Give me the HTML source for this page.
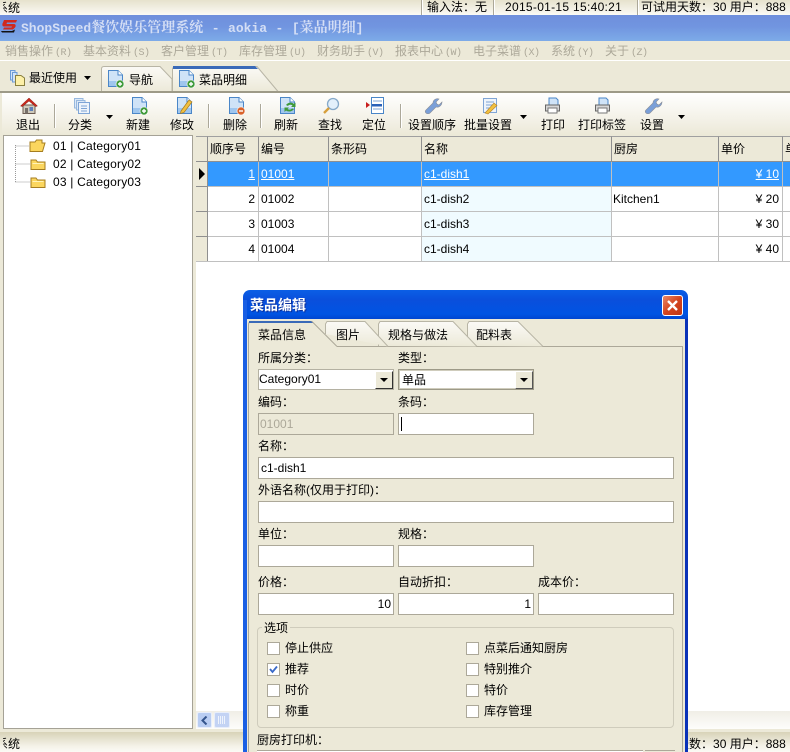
<!DOCTYPE html>
<html lang="zh"><head><meta charset="utf-8"><title>ShopSpeed</title>
<style>
html,body{margin:0;padding:0;width:790px;height:752px;overflow:hidden}
body{background:#ece9d8;font:12px/14px "Liberation Sans","Noto Sans CJK SC",sans-serif;color:#000}
div,span,svg{position:absolute;box-sizing:border-box}
#r{left:0;top:0;width:790px;height:752px;overflow:hidden;background:#ece9d8}
i{font-style:normal}
i.k{font-family:"Noto Sans CJK TC",sans-serif}
i.s{font:10px/14px "Liberation Mono",monospace;letter-spacing:-.5px;margin-left:2px}
i.z{font:bold 14px/15px "Noto Serif CJK SC",serif}
.t{white-space:nowrap}
.c{transform:translateX(-50%)}
.sep{width:1px;background:#aca899;box-shadow:1px 0 0 #fff}
.m{top:44px;color:#aca899;white-space:nowrap}
.h{top:136px;height:26px;background:#ece9d8;border-top:1px solid #a0a0a0;border-right:1px solid #8f8f8f;border-bottom:1px solid #8f8f8f;padding:5px 0 0 2px;white-space:nowrap}
.rl{left:196px;width:594px;height:1px;background:#c0c0c0}
.l{white-space:nowrap}
.cb{width:13px;height:13px;background:#fff;border:1px solid #aca899}
</style></head><body><div id="r">

<svg width="0" height="0" style="left:0;top:0"><defs>
<g id="doc"><path d="M1.500 .5H11L15.500 5V16.500H1.500Z" fill="#cfe3f7" stroke="#4a86c8"/><path d="M11 .5V5H15.500" fill="#fff" stroke="#4a86c8"/><path d="M2 11H15V16H2Z" fill="#9fc6ee"/></g>
<g id="plus"><circle cx="13" cy="14" r="4" fill="#3f9a3a" stroke="#fff" stroke-width=".6"/><path d="M11 14H15M13 12V16" stroke="#fff" stroke-width="1.400"/></g>
<g id="wr"><path d="M2 16C1 15 1 14 2 13L9 6C9 3 12 1 15 2L12 5L13 7L15 8L18 5C18 8 15 11 12 10L6 16C5 17 3 17 2 16Z" fill="#7a9fd8" stroke="#8a8f9a" stroke-width=".6"/></g>
<g id="pr"><path d="M5 1H12L14 3V8H5Z" fill="#cfe3f7" stroke="#4a86c8"/><path d="M1.500 8H15.500V14H1.500Z" fill="#d6d6d6" stroke="#666"/><path d="M4 11H13V16H4Z" fill="#fff" stroke="#777"/></g>
<g id="fold"><path d="M1 3H6L7.500 5H15V12.500H1Z" fill="#fbd65e" stroke="#a57d20"/><path d="M2.500 6.500H13.500" stroke="#fff3b8"/></g>
</defs></svg>

<!-- top status bar -->
<div style="left:0;top:0;width:790px;height:15px;background:linear-gradient(#e6e2cd,#fbfaf5)"></div>
<div class="t" style="left:3px;top:1px;width:17px;overflow:hidden;direction:rtl">系统</div>
<div class="sep" style="left:421px;top:0;height:15px"></div>
<div class="t" style="left:427px;top:0">输入法<i class="k">：</i>无</div>
<div class="sep" style="left:493px;top:0;height:15px"></div>
<div class="t" style="left:505px;top:0;letter-spacing:.3px">2015-01-15 15:40:21</div>
<div class="sep" style="left:637px;top:0;height:15px"></div>
<div class="t" style="left:641px;top:0">可试用天数<i class="k">：</i>30 用户<i class="k">：</i>888</div>

<!-- title bar -->
<div style="left:0;top:15px;width:790px;height:26px;background:linear-gradient(#6f8fdc,#7195e0 45%,#7dabe8)"></div>
<svg style="left:1px;top:19px" width="17" height="16" viewBox="0 0 17 16"><path d="M3 1H16L15 3.500H6L5.500 5H13C15 5 15 7.500 14 8.500L12 10.500H2L3 8.500H10.500L11 7.500H3C1 7.500 1 5 2 3.500Z" fill="#d0281e"/><path d="M0 12H11L14 10.500 13 13.500H1Z" fill="#111"/></svg>
<div class="t" style="left:21px;top:20px;color:#d4def5;font:bold 13px/15px 'Liberation Mono',monospace;word-spacing:.7px">ShopSpeed<i class="z">餐饮娱乐管理系统</i> - aokia - [<i class="z">菜品明细</i>]</div>

<!-- menu -->
<div class="m" style="left:5px">销售操作<i class="s">(R)</i></div>
<div class="m" style="left:83px">基本资料<i class="s">(S)</i></div>
<div class="m" style="left:161px">客户管理<i class="s">(T)</i></div>
<div class="m" style="left:239px">库存管理<i class="s">(U)</i></div>
<div class="m" style="left:317px">财务助手<i class="s">(V)</i></div>
<div class="m" style="left:395px">报表中心<i class="s">(W)</i></div>
<div class="m" style="left:473px">电子菜谱<i class="s">(X)</i></div>
<div class="m" style="left:551px">系统<i class="s">(Y)</i></div>
<div class="m" style="left:605px">关于<i class="s">(Z)</i></div>
<div style="left:0;top:60px;width:790px;height:1px;background:#fff"></div>

<!-- tabs row -->
<svg style="left:9px;top:69px" width="17" height="17" viewBox="0 0 17 17"><path d="M1.500 1.500H6V11H1.500Z" fill="#d3e4f7" stroke="#6d9bd6"/><path d="M3.500 3.500H8V13H3.500Z" fill="#d3e4f7" stroke="#6d9bd6"/><path d="M6.500 6.500H12L15.500 9V16.500H6.500Z" fill="#fdf0a8" stroke="#8a8040"/></svg>
<div class="t" style="left:29px;top:71px">最近使用</div>
<svg style="left:84px;top:76px" width="7" height="4"><path d="M0 0H7L3.500 4Z" fill="#000"/></svg>
<svg style="left:100px;top:65px" width="180" height="28" viewBox="0 0 180 28"><defs><linearGradient id="tg" x1="0" y1="0" x2="0" y2="1"><stop offset="0" stop-color="#fbfaf6"/><stop offset="1" stop-color="#ece9d8"/></linearGradient></defs><path d="M1.500 26V4Q1.500 1.500 4 1.500H60L72 14V27H1.500Z" fill="url(#tg)" stroke="#b8b5a5"/><path d="M72.500 26V3.500L74 1.500H157L178 26.500" fill="url(#tg)" stroke="#b8b5a5"/><path d="M73 1H155L158 4H73Z" fill="#3a6ab8"/></svg>
<svg style="left:107px;top:70px" width="19" height="19" viewBox="0 0 19 19"><use href="#doc"/><use href="#plus"/></svg>
<div class="t" style="left:129px;top:73px">导航</div>
<svg style="left:178px;top:70px" width="19" height="19" viewBox="0 0 19 19"><use href="#doc"/><use href="#plus"/></svg>
<div class="t" style="left:199px;top:73px">菜品明细</div>
<div style="left:0;top:91px;width:790px;height:2px;background:#9d9a88"></div>

<!-- toolbar -->
<div style="left:2px;top:93px;width:788px;height:42px;background:linear-gradient(#fff,#f5f3ea 55%,#ece9d8)"></div>
<svg style="left:20px;top:97px" width="18" height="18" viewBox="0 0 18 18"><path d="M3 8H15V16.500H3Z" fill="#cfcabb" stroke="#6b5a50"/><path d="M9.500 10H13V14H9.500Z" fill="#5d7fb8"/><path d="M5 11H8V16.500H5Z" fill="#77706a"/><path d="M.5 9L9 1L17.500 9L15.500 9.500L9 4L2.500 9.500Z" fill="#c9281c" stroke="#8a1c14" stroke-width=".5"/></svg>
<div class="t c" style="left:28px;top:118px">退出</div>
<div class="sep" style="left:54px;top:104px;height:24px"></div>
<svg style="left:73px;top:97px" width="18" height="18" viewBox="0 0 18 18"><path d="M1.500 1.500H10V11H1.500Z" fill="#dce8f7" stroke="#97b8de"/><path d="M3.500 3.500H12V13H3.500Z" fill="#dce8f7" stroke="#97b8de"/><path d="M5.500 5.500H16.500V16.500H5.500Z" fill="#eef4fb" stroke="#7fa5d6"/><path d="M8 9H14M8 11.500H14M8 14H14" stroke="#7fa5d6"/></svg>
<div class="t c" style="left:80px;top:118px">分类</div>
<svg style="left:106px;top:115px" width="7" height="4"><path d="M0 0H7L3.500 4Z" fill="#000"/></svg>
<svg style="left:131px;top:97px" width="19" height="19" viewBox="0 0 19 19"><use href="#doc"/><use href="#plus"/></svg>
<div class="t c" style="left:138px;top:118px">新建</div>
<svg style="left:176px;top:97px" width="19" height="19" viewBox="0 0 19 19"><use href="#doc"/><path d="M5 14L13 3L16 5L8 15.500L4.500 16.500Z" fill="#f1c040" stroke="#a87a1e" stroke-width=".7"/></svg>
<div class="t c" style="left:182px;top:118px">修改</div>
<div class="sep" style="left:208px;top:104px;height:24px"></div>
<svg style="left:228px;top:97px" width="19" height="19" viewBox="0 0 19 19"><use href="#doc"/><circle cx="13" cy="14" r="4" fill="#d9622a" stroke="#fff" stroke-width=".6"/><path d="M11 14H15" stroke="#fff" stroke-width="1.400"/></svg>
<div class="t c" style="left:235px;top:118px">删除</div>
<div class="sep" style="left:260px;top:104px;height:24px"></div>
<svg style="left:279px;top:97px" width="19" height="19" viewBox="0 0 19 19"><use href="#doc"/><path d="M7 8C9 5 13 5 15 7L16.500 5.500V10H12L13.500 8.500C12 7.500 10 7.500 9 9ZM15 12C13 15 9 15 7 13.500L5.500 15V10.500H10L8.500 12C10 13 12 13 13 11.500Z" fill="#3f9a3a"/></svg>
<div class="t c" style="left:286px;top:118px">刷新</div>
<svg style="left:322px;top:97px" width="18" height="18" viewBox="0 0 18 18"><circle cx="11" cy="7" r="5.500" fill="#e3f0fb" stroke="#86a9c9" stroke-width="1.300"/><path d="M7 11L2 16" stroke="#d7a03c" stroke-width="2.400"/></svg>
<div class="t c" style="left:330px;top:118px">查找</div>
<svg style="left:366px;top:97px" width="18" height="18" viewBox="0 0 18 18"><path d="M5.500 .5H17.500V16.500H5.500Z" fill="#fff" stroke="#4a86c8"/><path d="M7 4H16M7 12H16" stroke="#7fa5d6"/><path d="M6 7H16V9.500H6Z" fill="#2b62b8"/><path d="M0 5V11L4 8Z" fill="#c81e1e"/></svg>
<div class="t c" style="left:374px;top:118px">定位</div>
<div class="sep" style="left:400px;top:104px;height:24px"></div>
<svg style="left:424px;top:97px" width="19" height="18" viewBox="0 0 19 18"><use href="#wr"/></svg>
<div class="t c" style="left:432px;top:118px">设置顺序</div>
<svg style="left:481px;top:97px" width="18" height="18" viewBox="0 0 18 18"><path d="M2.500 1.500H15.500V15.500H2.500Z" fill="#eef4fb" stroke="#7fa5d6"/><path d="M5 5H13M5 8H13M5 11H13" stroke="#7fa5d6"/><path d="M4 16L13 6L16 8.500L7 17Z" fill="#f1c040" stroke="#b5832a" stroke-width=".6"/></svg>
<div class="t c" style="left:488px;top:118px">批量设置</div>
<svg style="left:520px;top:115px" width="7" height="4"><path d="M0 0H7L3.500 4Z" fill="#000"/></svg>
<svg style="left:544px;top:97px" width="17" height="18" viewBox="0 0 17 18"><use href="#pr"/></svg>
<div class="t c" style="left:553px;top:118px">打印</div>
<svg style="left:594px;top:97px" width="17" height="18" viewBox="0 0 17 18"><use href="#pr"/></svg>
<div class="t c" style="left:602px;top:118px">打印标签</div>
<svg style="left:644px;top:97px" width="19" height="18" viewBox="0 0 19 18"><use href="#wr"/></svg>
<div class="t c" style="left:652px;top:118px">设置</div>
<svg style="left:678px;top:115px" width="7" height="4"><path d="M0 0H7L3.500 4Z" fill="#000"/></svg>

<!-- tree -->
<div style="left:3px;top:135px;width:190px;height:594px;background:#fff;border:1px solid #a5a296"></div>
<svg style="left:14px;top:144px" width="18" height="42"><path d="M1.500 1V38M1.500 2H16M1.500 20H16M1.500 38H16" stroke="#999" stroke-dasharray="1 1" fill="none"/></svg>
<svg style="left:29px;top:139px" width="17" height="14" viewBox="0 0 17 14"><path d="M1 3H6L7.500 1H13V4H16L13.500 12.500H1Z" fill="#fbd65e" stroke="#a57d20"/></svg>
<svg style="left:30px;top:157px" width="16" height="14" viewBox="0 0 16 14"><use href="#fold"/></svg>
<svg style="left:30px;top:175px" width="16" height="14" viewBox="0 0 16 14"><use href="#fold"/></svg>
<div class="t" style="left:53px;top:139px;letter-spacing:.2px">01 | Category01</div>
<div class="t" style="left:53px;top:157px;letter-spacing:.2px">02 | Category02</div>
<div class="t" style="left:53px;top:175px;letter-spacing:.2px">03 | Category03</div>

<!-- grid -->
<div style="left:196px;top:136px;width:594px;height:593px;background:#fff"></div>
<div style="left:422px;top:187px;width:190px;height:75px;background:#f0fbff"></div>
<div style="left:196px;top:162px;width:594px;height:24px;background:#3399ff"></div>
<div class="h" style="left:196px;width:12px"></div>
<div class="h" style="left:208px;width:51px">顺序号</div>
<div class="h" style="left:259px;width:70px">编号</div>
<div class="h" style="left:329px;width:93px">条形码</div>
<div class="h" style="left:422px;width:190px">名称</div>
<div class="h" style="left:612px;width:107px">厨房</div>
<div class="h" style="left:719px;width:64px">单价</div>
<div class="h" style="left:783px;width:7px;overflow:hidden;border-right:0">单</div>
<div class="rl" style="top:186px"></div><div class="rl" style="top:211px"></div><div class="rl" style="top:236px"></div><div class="rl" style="top:261px"></div>
<div style="left:196px;top:162px;width:12px;height:100px;background:#ece9d8;border-right:1px solid #8f8f8f"></div>
<div style="left:196px;top:186px;width:12px;height:1px;background:#8f8f8f"></div>
<div style="left:196px;top:211px;width:12px;height:1px;background:#8f8f8f"></div>
<div style="left:196px;top:236px;width:12px;height:1px;background:#8f8f8f"></div>
<div style="left:196px;top:261px;width:12px;height:1px;background:#c0c0c0"></div>
<div style="left:258px;top:162px;width:1px;height:100px;background:#c0c0c0"></div>
<div style="left:328px;top:162px;width:1px;height:100px;background:#c0c0c0"></div>
<div style="left:421px;top:162px;width:1px;height:100px;background:#c0c0c0"></div>
<div style="left:611px;top:162px;width:1px;height:100px;background:#c0c0c0"></div>
<div style="left:718px;top:162px;width:1px;height:100px;background:#c0c0c0"></div>
<div style="left:782px;top:162px;width:1px;height:100px;background:#c0c0c0"></div>
<svg style="left:199px;top:168px" width="7" height="12"><path d="M0 0L6 6L0 12Z" fill="#000"/></svg>

<div class="t" style="left:208px;width:47px;text-align:right;top:167px;color:#fff;text-decoration:underline">1</div>
<div class="t" style="left:261px;top:167px;color:#fff;text-decoration:underline">01001</div>
<div class="t" style="left:424px;top:167px;color:#fff;text-decoration:underline">c1-dish1</div>
<div class="t" style="left:719px;width:60px;text-align:right;top:167px;color:#fff;text-decoration:underline">¥ 10</div>

<div class="t" style="left:208px;width:47px;text-align:right;top:192px">2</div>
<div class="t" style="left:261px;top:192px">01002</div>
<div class="t" style="left:424px;top:192px">c1-dish2</div>
<div class="t" style="left:613px;top:192px">Kitchen1</div>
<div class="t" style="left:719px;width:60px;text-align:right;top:192px">¥ 20</div>

<div class="t" style="left:208px;width:47px;text-align:right;top:217px">3</div>
<div class="t" style="left:261px;top:217px">01003</div>
<div class="t" style="left:424px;top:217px">c1-dish3</div>
<div class="t" style="left:719px;width:60px;text-align:right;top:217px">¥ 30</div>

<div class="t" style="left:208px;width:47px;text-align:right;top:242px">4</div>
<div class="t" style="left:261px;top:242px">01004</div>
<div class="t" style="left:424px;top:242px">c1-dish4</div>
<div class="t" style="left:719px;width:60px;text-align:right;top:242px">¥ 40</div>

<!-- h scrollbar -->
<div style="left:196px;top:711px;width:594px;height:18px;background:linear-gradient(#f0eee6,#fdfdfb)"></div>
<div style="left:197px;top:712px;width:15px;height:16px;background:#b9cdf2;border:1px solid #e8eefa;border-radius:2px"></div>
<svg style="left:201px;top:716px" width="7" height="9"><path d="M5.500 .5L1.500 4.500L5.500 8.500" fill="none" stroke="#34548c" stroke-width="2"/></svg>
<div style="left:214px;top:712px;width:16px;height:16px;background:#c3d3f4;border:1px solid #e8eefa;border-radius:2px"></div>
<svg style="left:218px;top:716px" width="8" height="8"><path d="M.5 0V8M2.500 0V8M4.500 0V8M6.500 0V8" stroke="#eef3fc"/></svg>

<!-- bottom status -->
<div style="left:0;top:729px;width:790px;height:3px;background:#ece9d8"></div>
<div style="left:0;top:732px;width:790px;height:20px;background:linear-gradient(#d8d3b8,#f4f2e8 70%,#fbfaf5)"></div>
<div class="t" style="left:3px;top:737px;width:17px;overflow:hidden;direction:rtl">系统</div>
<div class="t" style="left:641px;top:737px">可试用天数<i class="k">：</i>30 用户<i class="k">：</i>888</div>

<!-- dialog -->
<div style="left:243px;top:290px;width:445px;height:462px;border-radius:7px 7px 0 0;background:linear-gradient(#0b5fe6,#0a4fdc 10px,#0054e3 24px,#0046d0 29px,#0a32b8 29px)"></div>
<div style="left:243px;top:300px;width:4px;height:452px;background:#1a5fe4"></div>
<div style="left:247px;top:319px;width:438px;height:433px;background:#ece9d8"></div>
<div class="t" style="left:250px;top:297px;color:#fff;font-weight:bold;font-size:14px;line-height:16px;text-shadow:1px 1px 0 #0a2f9c">菜品编辑</div>
<div style="left:662px;top:295px;width:21px;height:21px;background:linear-gradient(135deg,#e8896a,#d4451f 50%,#c03514);border:1px solid #fff;border-radius:3px"></div>
<svg style="left:666px;top:299px" width="13" height="13"><path d="M2 2L11 11M11 2L2 11" stroke="#fff" stroke-width="2.400"/></svg>

<!-- dialog tabs -->
<div style="left:248px;top:346px;width:435px;height:406px;border:1px solid #aca899;border-bottom:0"></div>
<svg style="left:247px;top:320px" width="300" height="28" viewBox="0 0 300 28">
<defs><linearGradient id="dg" x1="0" y1="0" x2="0" y2="1"><stop offset="0" stop-color="#fbfaf6"/><stop offset="1" stop-color="#ece9d8"/></linearGradient></defs>
<path d="M220.500 26V4L222 1.500H271L296 26.500" fill="url(#dg)" stroke="#b8b5a5"/>
<path d="M131.500 26V4L133 1.500H206L230 26.500" fill="url(#dg)" stroke="#b8b5a5"/>
<path d="M78.500 14V4L80 1.500H118L141 26.500" fill="url(#dg)" stroke="#b8b5a5"/>
<path d="M1.500 27V5Q1.500 2.500 4 2.500H65L90 26.500L90 27Z" fill="#ece9d8"/>
<path d="M1.500 27V5Q1.500 1.500 4 1.500H65L90 26.500" fill="none" stroke="#aca899"/>
<path d="M2 1H64L66 3H2Z" fill="#3a6ab8"/>
</svg>
<div class="t" style="left:258px;top:328px">菜品信息</div>
<div class="t" style="left:336px;top:328px">图片</div>
<div class="t" style="left:388px;top:328px">规格与做法</div>
<div class="t" style="left:476px;top:328px">配料表</div>

<!-- form -->
<div class="l" style="left:258px;top:351px">所属分类<i class="k">：</i></div>
<div class="l" style="left:398px;top:351px">类型<i class="k">：</i></div>
<div style="left:258px;top:369px;width:136px;height:21px;background:#fff;border:1px solid #b4b1a2"></div>
<div class="t" style="left:259px;top:372px">Category01</div>
<div style="left:375px;top:371px;width:18px;height:18px;background:#ece9d8;border:1px solid;border-color:#fff #333 #333 #fff"></div>
<svg style="left:380px;top:378px" width="8" height="4"><path d="M0 0H8L4 4Z" fill="#000"/></svg>
<div style="left:398px;top:369px;width:136px;height:21px;background:#fff;border:1px solid #9d9a88;outline:1px solid #cfccbc;outline-offset:-2px"></div>
<div class="t" style="left:402px;top:373px">单品</div>
<div style="left:515px;top:371px;width:18px;height:18px;background:#ece9d8;border:1px solid;border-color:#fff #555 #555 #fff"></div>
<svg style="left:520px;top:378px" width="8" height="4"><path d="M0 0H8L4 4Z" fill="#000"/></svg>

<div class="l" style="left:258px;top:395px">编码<i class="k">：</i></div>
<div class="l" style="left:398px;top:395px">条码<i class="k">：</i></div>
<div style="left:258px;top:413px;width:136px;height:22px;background:#ece9d8;border:1px solid #aca899"></div>
<div class="t" style="left:260px;top:417px;color:#aca899">01001</div>
<div style="left:398px;top:413px;width:136px;height:22px;background:#fff;border:1px solid #aca899"></div>
<div style="left:401px;top:417px;width:1px;height:14px;background:#000"></div>

<div class="l" style="left:258px;top:439px">名称<i class="k">：</i></div>
<div style="left:258px;top:457px;width:416px;height:22px;background:#fff;border:1px solid #aca899"></div>
<div class="t" style="left:261px;top:461px">c1-dish1</div>

<div class="l" style="left:258px;top:483px">外语名称(仅用于打印)<i class="k">：</i></div>
<div style="left:258px;top:501px;width:416px;height:22px;background:#fff;border:1px solid #aca899"></div>

<div class="l" style="left:258px;top:527px">单位<i class="k">：</i></div>
<div class="l" style="left:398px;top:527px">规格<i class="k">：</i></div>
<div style="left:258px;top:545px;width:136px;height:22px;background:#fff;border:1px solid #aca899"></div>
<div style="left:398px;top:545px;width:136px;height:22px;background:#fff;border:1px solid #aca899"></div>

<div class="l" style="left:258px;top:575px">价格<i class="k">：</i></div>
<div class="l" style="left:398px;top:575px">自动折扣<i class="k">：</i></div>
<div class="l" style="left:538px;top:575px">成本价<i class="k">：</i></div>
<div style="left:258px;top:593px;width:136px;height:22px;background:#fff;border:1px solid #aca899"></div>
<div class="t" style="left:258px;width:133px;text-align:right;top:597px">10</div>
<div style="left:398px;top:593px;width:136px;height:22px;background:#fff;border:1px solid #aca899"></div>
<div class="t" style="left:398px;width:133px;text-align:right;top:597px">1</div>
<div style="left:538px;top:593px;width:136px;height:22px;background:#fff;border:1px solid #aca899"></div>

<div style="left:257px;top:627px;width:417px;height:101px;border:1px solid #cfccbc;border-radius:4px"></div>
<div class="t" style="left:262px;top:621px;padding:0 2px;background:#ece9d8">选项</div>

<div class="cb" style="left:267px;top:642px"></div><div class="l" style="left:285px;top:641px">停止供应</div>
<div class="cb" style="left:267px;top:663px"></div><div class="l" style="left:285px;top:662px">推荐</div>
<svg style="left:269px;top:665px" width="9" height="9"><path d="M1 4L3.500 7L8 1.500" fill="none" stroke="#3a6ac8" stroke-width="1.800"/></svg>
<div class="cb" style="left:267px;top:684px"></div><div class="l" style="left:285px;top:683px">时价</div>
<div class="cb" style="left:267px;top:705px"></div><div class="l" style="left:285px;top:704px">称重</div>
<div class="cb" style="left:466px;top:642px"></div><div class="l" style="left:484px;top:641px">点菜后通知厨房</div>
<div class="cb" style="left:466px;top:663px"></div><div class="l" style="left:484px;top:662px">特别推介</div>
<div class="cb" style="left:466px;top:684px"></div><div class="l" style="left:484px;top:683px">特价</div>
<div class="cb" style="left:466px;top:705px"></div><div class="l" style="left:484px;top:704px">库存管理</div>

<div class="l" style="left:257px;top:733px">厨房打印机<i class="k">：</i></div>
<div style="left:257px;top:750px;width:386px;height:2px;background:#fff;border-top:1px solid #aca899"></div>
<div style="left:645px;top:750px;width:30px;height:2px;border-top:1px solid #aca899"></div>

</div></body></html>
